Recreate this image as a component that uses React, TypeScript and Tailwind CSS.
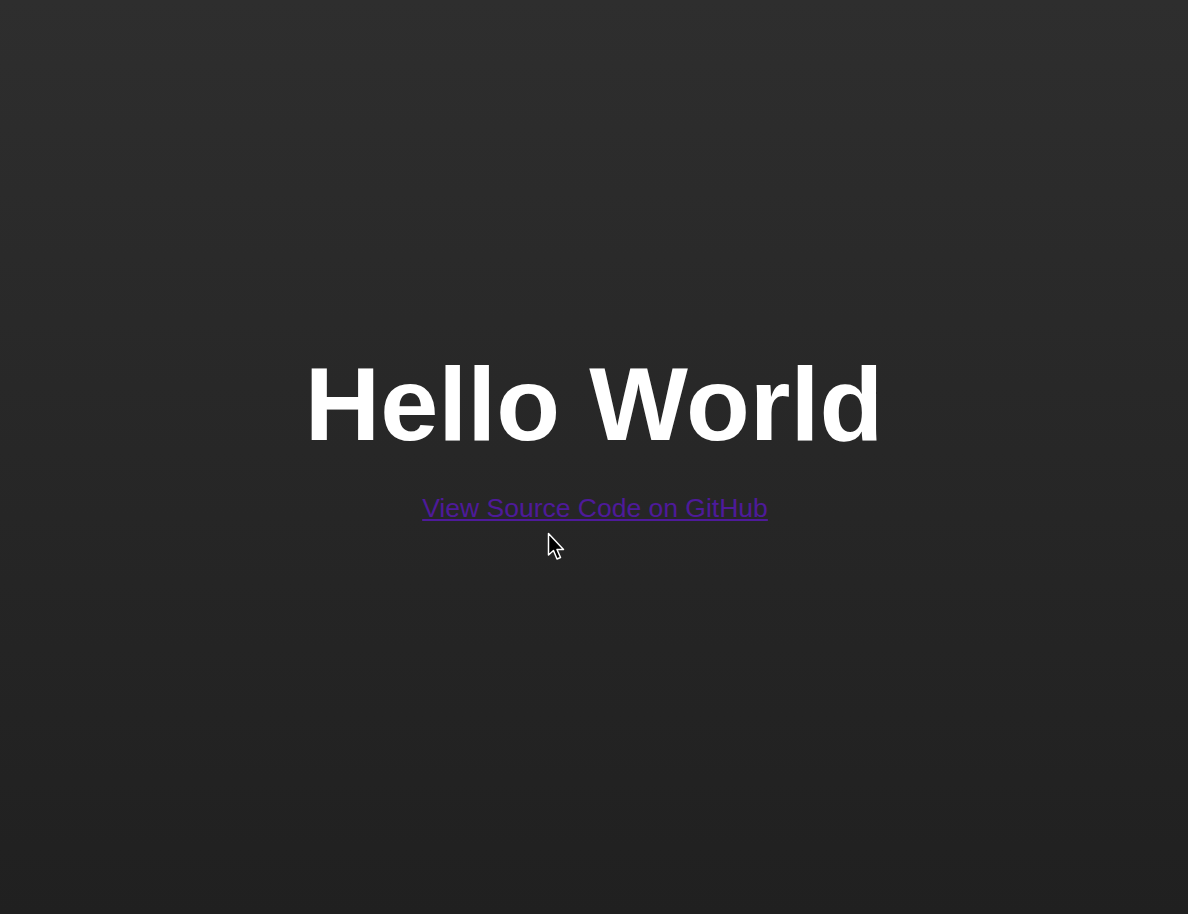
function Cursor() {
  return (
    <svg
      className="pointer-events-none absolute left-[547px] top-[532px]"
      width="18"
      height="30"
      viewBox="0 0 18 30"
    >
      <path
        d="M1.5 1.5 L1.5 23 L6.5 18.5 L10 27 L13.5 25.5 L10 17.5 L16.5 17.5 Z"
        fill="#000"
        stroke="#fff"
        strokeWidth="1.5"
        strokeLinejoin="round"
      />
    </svg>
  );
}

export default function App() {
  return (
    <div className="relative flex min-h-screen w-full flex-col items-center bg-gradient-to-b from-[#2e2e2e] to-[#202020] font-['Liberation_Sans',Arial,sans-serif]">
      <h1 className="mt-[352px] text-[104.5px] font-bold leading-none text-white">
        Hello World
      </h1>
      <a
        href="#"
        className="mt-[32px] pl-[2px] text-[26.5px] leading-[39px] text-[#4e1a9a] underline"
      >
        View Source Code on GitHub
      </a>
      <Cursor />
    </div>
  );
}
